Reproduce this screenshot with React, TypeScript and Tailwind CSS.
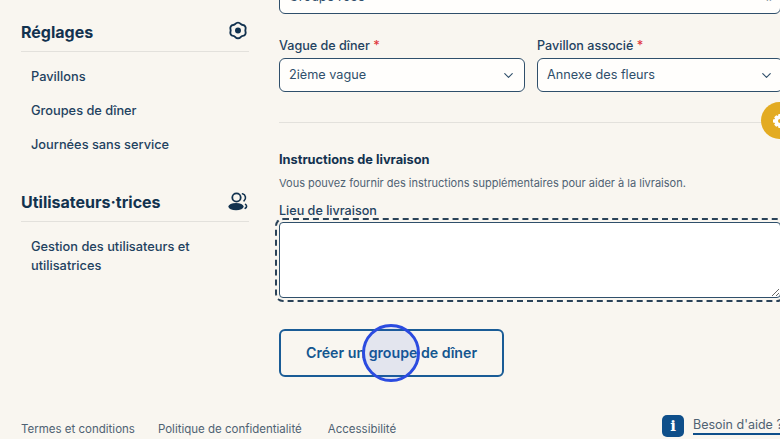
import { ChevronDown } from 'lucide-react'

function GearIcon() {
  return (
    <svg width="20" height="21" viewBox="0 0 18 19" fill="none" className="shrink-0">
      <path d="M6.600 2.600c1.300-1.500 3.500-1.500 4.800 0 .6.700 1.100.9 2 1 1.900.2 3 2.100 2.400 3.900-.3.900-.3 1.300 0 2.100.6 1.800-.5 3.700-2.400 3.900-.9.100-1.400.3-2 1-1.300 1.500-3.500 1.500-4.800 0-.6-.7-1.100-.9-2-1-1.900-.2-3-2.100-2.400-3.900.3-.8.3-1.200 0-2.100-.6-1.800.5-3.700 2.400-3.900.9-.1 1.400-.3 2-1z" stroke="#12324f" strokeWidth="1.700" />
      <circle cx="9" cy="8.600" r="2.700" fill="#12324f" />
    </svg>
  )
}

function UsersIcon() {
  return (
    <svg width="20" height="19" viewBox="0 0 20 19" fill="none" className="shrink-0">
      <circle cx="8.500" cy="5.500" r="4.200" stroke="#12324f" strokeWidth="1.800" />
      <ellipse cx="8" cy="14.600" rx="7.600" ry="3.700" fill="#12324f" />
      <path d="M14.500 1.800a4 4 0 0 1 1.500 7" stroke="#12324f" strokeWidth="1.600" strokeLinecap="round" />
      <path d="M17.500 12.400c1.500.9 1.500 3-.3 3.900" stroke="#12324f" strokeWidth="1.600" strokeLinecap="round" />
    </svg>
  )
}

function SideSection({ title, icon, items }: { title: string; icon: React.ReactNode; items: string[] }) {
  return (
    <div>
      <div className="flex h-[39px] items-center justify-between border-b border-[#e3e1dc] pb-[1px] pr-[1px]">
        <span className="text-[16px] font-bold text-[#12324f]">{title}</span>
        {icon}
      </div>
      <ul className="mt-[13px] flex flex-col gap-[12px] pl-[10px] text-[12.8px] font-medium leading-[19px] text-[#1f4260]">
        {items.map(item => (
          <li key={item} className="py-[1.5px]">{item}</li>
        ))}
      </ul>
    </div>
  )
}

function SelectBox({ label, value }: { label: string; value: string }) {
  return (
    <div>
      <div className="mb-[3px] text-[12.6px] font-medium leading-[18px] text-[#1f4260]">
        {label} <span className="text-[#e0353b]">*</span>
      </div>
      <div className="flex h-[34px] items-center justify-between rounded-[6px] border border-[#2f4f6b] bg-[#fffefc] pl-[9px] pr-[8px] text-[12.7px] text-[#2f4f6b]">
        <span>{value}</span>
        <ChevronDown size={15} strokeWidth={1.8} className="text-[#2f4f6b]" />
      </div>
    </div>
  )
}

export default function App() {
  return (
    <div className="flex h-[439px] w-[780px] flex-col overflow-hidden bg-[#f9f6f0] font-['Inter',sans-serif]">
      <div className="flex h-[411px] shrink-0">
        <aside className="ml-[21px] w-[228px] shrink-0 pt-[13px]">
          <SideSection title="Réglages" icon={<GearIcon />} items={['Pavillons', 'Groupes de dîner', 'Journées sans service']} />
          <div className="mt-[28px]">
            <SideSection title="Utilisateurs·trices" icon={<UsersIcon />} items={['Gestion des utilisateurs et utilisatrices']} />
          </div>
        </aside>

        <main className="ml-[30px] w-[502px] shrink-0">
          <div className="-mt-[21px] flex h-[35px] items-center justify-between rounded-[6px] border border-[#2f4f6b] bg-[#fffefc] px-[9px] text-[13px] text-[#2f4f6b]">
            <span>Groupe rose</span>
            <span className="mr-[-1px] text-[#8a97a3]">ıı</span>
          </div>

          <div className="mt-[23px] grid grid-cols-[246px_246px] gap-[12px]">
            <SelectBox label="Vague de dîner" value="2ième vague" />
            <SelectBox label="Pavillon associé" value="Annexe des fleurs" />
          </div>

          <div className="mt-[30px] border-t border-[#e3e1dc]" />

          <h2 className="mt-[28px] text-[12.8px] font-bold leading-[18px] text-[#12324f]">Instructions de livraison</h2>
          <p className="mt-[6px] text-[11px] leading-[16px] text-[#4f6273]">
            Vous pouvez fournir des instructions supplémentaires pour aider à la livraison.
          </p>
          <div className="mt-[11px] text-[12.6px] font-medium leading-[17px] text-[#1f4260]">Lieu de livraison</div>
          <textarea className="mt-[3px] block h-[76px] w-[502px] rounded-[4px] border border-[#2f4f6b] bg-white outline-2 outline-offset-2 outline-dashed outline-[#2a4258]" />

          <button className="mt-[31px] block h-[48px] w-[225px] rounded-[6px] border-2 border-[#1a5c96] text-[14.2px] font-semibold text-[#14568f]">
            Créer un groupe de dîner
          </button>
        </main>
      </div>

      <footer className="flex h-[28px] items-center pl-[21px] text-[11.5px] text-[#4f6273]">
        <a className="mt-[9px]">Termes et conditions</a>
        <a className="ml-[23px] mt-[9px]">Politique de confidentialité</a>
        <a className="ml-[26px] mt-[9px]">Accessibilité</a>
        <div className="absolute left-[662px] top-[415px] flex items-center whitespace-nowrap">
          <span className="flex h-[22px] w-[22px] items-center justify-center rounded-[5px] bg-[#0f4f8a] font-['DejaVu_Serif',serif] text-[15px] font-bold text-white">i</span>
          <span className="ml-[9px] mt-[-1px] border-b-2 border-[#0f4f8a] text-[12.5px] leading-[17px] text-[#4f6273]">Besoin d'aide ?</span>
        </div>
      </footer>

      {/* Floating yellow button, cut off by the window edge */}
      <div className="absolute left-[761px] top-[102px] flex h-[37px] w-[37px] items-center rounded-full bg-[#e3ab22] pl-[12px]">
        <svg width="14" height="14" viewBox="0 0 14 14" fill="white">
          <path d="M5.500 0h3l.5 2 1.800-.8 2 2-.9 1.800 2.100.5v3l-2.100.5.9 1.800-2 2-1.800-.9-.5 2.100h-3L5 11.900l-1.800.9-2-2 .9-1.800L0 8.500v-3l2.100-.5-.9-1.800 2-2L5 2z" />
          <circle cx="7" cy="7" r="2" fill="#e3ab22" />
        </svg>
      </div>

      {/* Click highlight */}
      <div className="pointer-events-none absolute left-[362px] top-[324px] h-[58px] w-[58px] rounded-full border-[3px] border-[#2b4be0] bg-[#2b4be0]/10" />
    </div>
  )
}
